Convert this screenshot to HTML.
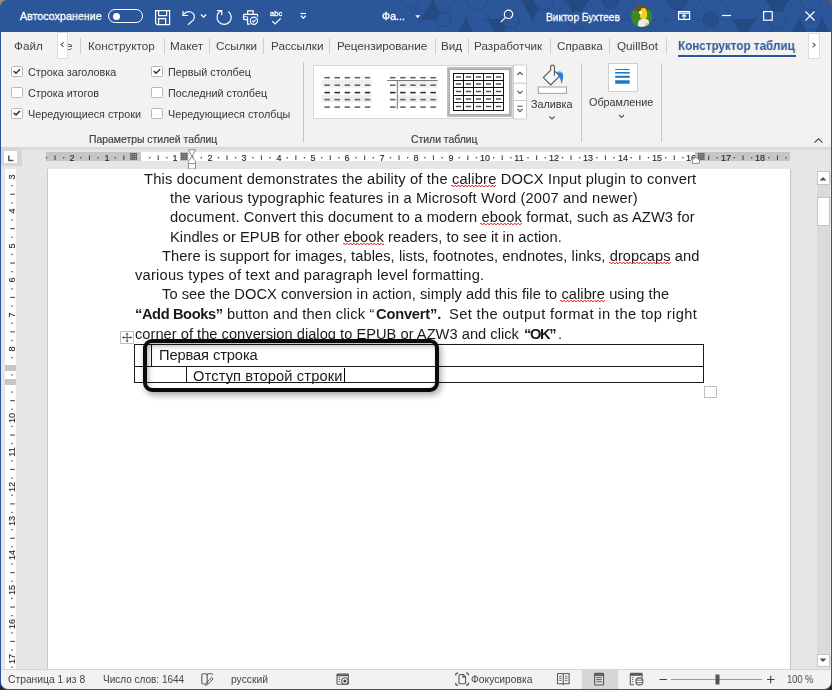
<!DOCTYPE html>
<html><head><meta charset="utf-8">
<style>
*{margin:0;padding:0;box-sizing:border-box}
html,body{width:832px;height:690px;overflow:hidden}
body{position:relative;background:#2a2624;font-family:"Liberation Sans",sans-serif}
.a{position:absolute}
.t{position:absolute;white-space:nowrap;line-height:1;transform-origin:0 0;will-change:transform}
svg{position:absolute;overflow:visible}
#win{position:absolute;left:0;top:0;width:832px;height:690px;border-radius:8px;overflow:hidden;background:#2b579a}
.tab{color:#424242;font-size:11.7px}
.sep{position:absolute;width:1px;background:#d2d0ce}
.cb{position:absolute;width:11.4px;height:11.4px;border:1px solid #b8b8b8;border-radius:1.5px;background:#fff}
.rib{color:#363636;font-size:10.8px}
.doc{color:#1a1a1a;font-size:14.67px}
.st{color:#444;font-size:10.3px}
.rl{color:#2a2a2a;font-size:9px;-webkit-text-stroke:0.15px #2a2a2a}
b{font-weight:700}
.sp{text-decoration:none;position:relative}
.sp::after{content:"";position:absolute;left:-1px;right:0;top:14.2px;height:2.4px;background:linear-gradient(45deg,transparent 35%,#e8303a 35%,#e8303a 65%,transparent 65%) 0 0/3.4px 2.4px repeat-x,linear-gradient(-45deg,transparent 35%,#e8303a 35%,#e8303a 65%,transparent 65%) 1.7px 0/3.4px 2.4px repeat-x;opacity:0.9}
</style></head><body>
<div class="a" style="left:0;top:0;width:14px;height:14px;background:#998a76"></div>
<div class="a" style="left:818px;top:0;width:14px;height:14px;background:#5b5a68"></div>
<div id="win">
<!-- ============ TITLE BAR ============ -->
<div class="a" style="left:0;top:0;width:832px;height:32px;background:#2b579a"></div>
<svg style="left:0;top:0" width="832" height="32"><defs><clipPath id="pc"><rect x="385" y="0" width="447" height="32"/></clipPath></defs><g clip-path="url(#pc)"><path d="M365.70 0L376.85 19.5L387.95 39M387.95 0L376.85 19.5L365.70 39M387.95 0L399.10 19.5L410.20 39M410.20 0L399.10 19.5L387.95 39M410.20 0L421.35 19.5L432.45 39M432.45 0L421.35 19.5L410.20 39M432.45 0L443.60 19.5L454.70 39M454.70 0L443.60 19.5L432.45 39M454.70 0L465.85 19.5L476.95 39M476.95 0L465.85 19.5L454.70 39M476.95 0L488.10 19.5L499.20 39M499.20 0L488.10 19.5L476.95 39M499.20 0L510.35 19.5L521.45 39M521.45 0L510.35 19.5L499.20 39M521.45 0L532.60 19.5L543.70 39M543.70 0L532.60 19.5L521.45 39M543.70 0L554.85 19.5L565.95 39M565.95 0L554.85 19.5L543.70 39M565.95 0L577.10 19.5L588.20 39M588.20 0L577.10 19.5L565.95 39M588.20 0L599.35 19.5L610.45 39M610.45 0L599.35 19.5L588.20 39M610.45 0L621.60 19.5L632.70 39M632.70 0L621.60 19.5L610.45 39M632.70 0L643.85 19.5L654.95 39M654.95 0L643.85 19.5L632.70 39M654.95 0L666.10 19.5L677.20 39M677.20 0L666.10 19.5L654.95 39M677.20 0L688.35 19.5L699.45 39M699.45 0L688.35 19.5L677.20 39M699.45 0L710.60 19.5L721.70 39M721.70 0L710.60 19.5L699.45 39M721.70 0L732.85 19.5L743.95 39M743.95 0L732.85 19.5L721.70 39M743.95 0L755.10 19.5L766.20 39M766.20 0L755.10 19.5L743.95 39M766.20 0L777.35 19.5L788.45 39M788.45 0L777.35 19.5L766.20 39M788.45 0L799.60 19.5L810.70 39M810.70 0L799.60 19.5L788.45 39M810.70 0L821.85 19.5L832.95 39M832.95 0L821.85 19.5L810.70 39M832.95 0L844.10 19.5L855.20 39M855.20 0L844.10 19.5L832.95 39M855.20 0L866.35 19.5L877.45 39M877.45 0L866.35 19.5L855.20 39M385 19.5H832" stroke="#000" stroke-opacity="0.08" stroke-width="1" fill="none"/><path d="M421.35 19.5L443.60 19.5L432.45 0.0z" fill="#000" fill-opacity="0.14"/><path d="M465.85 19.5L454.70 39.0L476.95 39.0z" fill="#000" fill-opacity="0.14"/><path d="M488.10 19.5L510.35 19.5L499.20 39.0z" fill="#000" fill-opacity="0.14"/><path d="M521.45 0.0L543.70 0.0L532.60 19.5z" fill="#000" fill-opacity="0.14"/><path d="M565.95 0.0L588.20 0.0L577.10 19.5z" fill="#000" fill-opacity="0.14"/><path d="M732.85 19.5L755.10 19.5L743.95 39.0z" fill="#000" fill-opacity="0.14"/><path d="M766.20 0.0L788.45 0.0L777.35 19.5z" fill="#000" fill-opacity="0.14"/><path d="M799.60 19.5L788.45 39.0L810.70 39.0z" fill="#000" fill-opacity="0.14"/><path d="M821.85 19.5L810.70 39.0L832.95 39.0z" fill="#000" fill-opacity="0.14"/><circle cx="410.20" cy="0.0" r="7.5" fill="#2b579a" stroke="#000" stroke-opacity="0.12"/><circle cx="443.60" cy="19.5" r="7.2" fill="#2b579a" stroke="#000" stroke-opacity="0.13"/><circle cx="476.95" cy="0.0" r="10" fill="#2b579a" stroke="#000" stroke-opacity="0.12"/><circle cx="510.35" cy="19.5" r="8.5" fill="#2b579a" stroke="#000" stroke-opacity="0.12"/><circle cx="543.70" cy="0.0" r="10" fill="#2b579a" stroke="#000" stroke-opacity="0.13"/><circle cx="577.10" cy="19.5" r="9" fill="#2b579a" stroke="#000" stroke-opacity="0.12"/><circle cx="610.45" cy="0.0" r="8.5" fill="#264e8b" stroke="#000" stroke-opacity="0.11"/><circle cx="677.20" cy="0.0" r="10" fill="#264e8b" stroke="#000" stroke-opacity="0.11"/><circle cx="710.60" cy="19.5" r="7.3" fill="#264e8b" stroke="#000" stroke-opacity="0.11"/><circle cx="777.35" cy="19.5" r="9" fill="#2b579a" stroke="#000" stroke-opacity="0.13"/><circle cx="810.70" cy="0.0" r="10" fill="#2b579a" stroke="#000" stroke-opacity="0.12"/><circle cx="810.70" cy="39.0" r="10" fill="#2b579a" stroke="#000" stroke-opacity="0.12"/></g></svg>
<div class="t" style="left:20px;top:10.7px;font-size:11px;color:#fff;-webkit-text-stroke:0.35px #fff;transform:scaleX(0.975)">Автосохранение</div>
<div class="a" style="left:108px;top:9px;width:35px;height:14px;border:1px solid #fff;border-radius:7px"></div>
<div class="a" style="left:112.5px;top:12.5px;width:7px;height:7px;background:#fff;border-radius:50%"></div>
<!-- save -->
<svg style="left:0;top:0" width="832" height="32" viewBox="0 0 832 32">
 <g fill="none" stroke="#fff" stroke-width="1.2">
  <path d="M155.6 10.6h14v14h-12.5l-1.5-1.5z"/>
  <path d="M158.6 10.6v5h8v-5"/>
  <path d="M158.6 24.6v-6h7v6"/>
  <path d="M183 11v4.5h5"/>
  <path d="M183 15.5c2-3 5-4.5 8-3.5c3.5 1.2 4.3 5.2 2.2 8.2l-5.2 4.5"/>
  <path d="M201 14.5l2.6 2.6l2.6-2.6"/>
  <path d="M228.3 11.5A7.1 7.1 0 1 1 220.8 11"/>
  <path d="M217 10.6h4.7v4.6"/>
  <path d="M247.6 14.6v-3.8h5.6v3.8"/>
  <path d="M247.4 19.6h-3c-0.5 0-0.8-0.3-0.8-0.8v-3.6c0-0.5 0.3-0.8 0.8-0.8h12.4c0.5 0 0.8 0.3 0.8 0.8v1.6"/>
  <path d="M243.8 16.8h4.2" stroke-width="0.9"/>
  <path d="M247.6 17.6v6.6h2.6"/>
  <circle cx="253.9" cy="20.7" r="3.6"/>
  <path d="M252.2 20.8l1.2 1.2l2.2-2.3"/>
  <path d="M272.3 21.2l2.8 2.8l5.6-5.6"/>
  <path d="M300.5 13.5h5.5"/>
  <path d="M300.8 15.8l2.5 2.3l2.5-2.3"/>
  <circle cx="508.5" cy="14.3" r="4.2"/>
  <path d="M505.5 17.3l-4.8 4.8"/>
  <rect x="678.6" y="11.6" width="11" height="7.8"/>
  <path d="M679 13.2h10"/>
  <path d="M684.1 14.5v5M682 16.5l2.1-2l2.1 2"/>
  <path d="M722 15.5h9"/>
  <rect x="763.6" y="11.6" width="8.6" height="8.6"/>
  <path d="M805.5 11.5l9 9M814.5 11.5l-9 9"/>
 </g>
 <path d="M415.3 15.3h4.8l-2.4 2.7z" fill="#fff"/>
</svg>
<div class="t" style="left:270.3px;top:9.9px;font-size:7.2px;color:#fff;-webkit-text-stroke:0.3px #fff;transform:scaleX(1.05)">abc</div>
<div class="t" style="left:382px;top:10.8px;font-size:10.7px;color:#fff;-webkit-text-stroke:0.35px #fff">Фа...</div>
<div class="t" style="left:545.8px;top:11.7px;font-size:11px;color:#fff;-webkit-text-stroke:0.35px #fff;transform:scaleX(0.93)">Виктор Бухтеев</div>
<!-- avatar -->
<div class="a" style="left:630.6px;top:5.6px;width:21.8px;height:21.8px;border-radius:50%;background:#3a8b24;overflow:hidden">
 <div class="a" style="left:-2px;top:-6px;width:26px;height:11px;background:#7a4a1c;border-radius:0 0 50% 40%"></div>
 <div class="a" style="left:9.3px;top:2.3px;width:7px;height:11px;background:#f2cf2a;border-radius:45% 45% 35% 35%"></div>
 <div class="a" style="left:8.6px;top:5.6px;width:3px;height:2.6px;background:#fff;border-radius:50%"></div>
 <div class="a" style="left:7.2px;top:13.2px;width:11px;height:10px;background:#ecebe6;border-radius:45% 35% 0 0"></div>
 <div class="a" style="left:14.5px;top:17.5px;width:4px;height:3px;background:#f2cf2a;border-radius:40%"></div>
</div>

<!-- ============ RIBBON ============ -->
<div class="a" style="left:1px;top:32px;width:830px;height:115px;background:#f3f2f1"></div>
<div class="a" style="left:1px;top:147px;width:830px;height:1px;background:#d6d6d6"></div>
<!-- tabs -->
<div class="t tab" style="left:14.4px;top:40.1px">Файл</div>
<div class="t tab" style="left:65.6px;top:40.1px">е</div>
<div class="a" style="left:56.5px;top:32px;width:11.5px;height:27px;background:#fff;border:1px solid #dcdcdc"></div>
<svg style="left:0;top:0" width="832" height="60"><path d="M63.6 42.3l-2.6 2.3l2.6 2.3" fill="none" stroke="#555" stroke-width="1.1"/></svg>
<div class="sep" style="left:80px;top:38px;height:16px"></div>
<div class="t tab" style="left:87.6px;top:40.1px">Конструктор</div>
<div class="sep" style="left:164px;top:38px;height:16px"></div>
<div class="t tab" style="left:169.5px;top:40.1px">Макет</div>
<div class="sep" style="left:209px;top:38px;height:16px"></div>
<div class="t tab" style="left:216px;top:40.1px">Ссылки</div>
<div class="sep" style="left:262.5px;top:38px;height:16px"></div>
<div class="t tab" style="left:270.5px;top:40.1px">Рассылки</div>
<div class="sep" style="left:328.7px;top:38px;height:16px"></div>
<div class="t tab" style="left:336.6px;top:40.1px">Рецензирование</div>
<div class="sep" style="left:435px;top:38px;height:16px"></div>
<div class="t tab" style="left:441px;top:40.1px">Вид</div>
<div class="sep" style="left:467.5px;top:38px;height:16px"></div>
<div class="t tab" style="left:474px;top:40.1px">Разработчик</div>
<div class="sep" style="left:550px;top:38px;height:16px"></div>
<div class="t tab" style="left:557px;top:40.1px">Справка</div>
<div class="sep" style="left:609px;top:38px;height:16px"></div>
<div class="t tab" style="left:617px;top:40.1px">QuillBot</div>
<div class="sep" style="left:666px;top:38px;height:16px"></div>
<div class="t tab" style="left:678.3px;top:40.4px;font-size:12.5px;font-weight:700;color:#2b579a;transform:scaleX(0.933)">Конструктор таблиц</div>
<div class="a" style="left:678px;top:55px;width:118px;height:2px;background:#2b579a"></div>
<div class="a" style="left:808px;top:32.5px;width:12px;height:26px;background:#fff;border:1px solid #dcdcdc"></div>
<svg style="left:0;top:0" width="832" height="60"><path d="M812.6 42.8l2.6 2.3l-2.6 2.3" fill="none" stroke="#555" stroke-width="1.1"/></svg>

<!-- group 1 checkboxes -->
<div class="cb" style="left:11.2px;top:66px"></div>
<div class="cb" style="left:11.2px;top:86.7px"></div>
<div class="cb" style="left:11.2px;top:107.7px"></div>
<div class="cb" style="left:151.3px;top:66px"></div>
<div class="cb" style="left:151.3px;top:86.7px"></div>
<div class="cb" style="left:151.3px;top:107.7px"></div>
<svg style="left:0;top:0" width="300" height="130">
 <g fill="none" stroke="#3a3a3a" stroke-width="1.1">
  <path d="M13.6 71.2l2.4 2l4-4" stroke-width="1.5"/>
  <path d="M13.6 112.9l2.4 2l4-4" stroke-width="1.5"/>
  <path d="M153.7 71.2l2.4 2l4-4" stroke-width="1.5"/>
 </g>
</svg>
<div class="t rib" style="left:28px;top:66.8px">Строка заголовка</div>
<div class="t rib" style="left:28px;top:88.4px">Строка итогов</div>
<div class="t rib" style="left:28px;top:109px">Чередующиеся строки</div>
<div class="t rib" style="left:168.4px;top:66.8px">Первый столбец</div>
<div class="t rib" style="left:168.4px;top:88.4px">Последний столбец</div>
<div class="t rib" style="left:168.4px;top:109px">Чередующиеся столбцы</div>
<div class="t rib" style="left:88.7px;top:135.2px;font-size:10.4px;color:#444;-webkit-text-stroke:0.2px #444">Параметры стилей таблиц</div>
<div class="sep" style="left:303px;top:62px;height:80px;background:#c8c6c4"></div>

<!-- gallery -->
<div class="a" style="left:313px;top:65px;width:200px;height:54px;background:#fff;border:1px solid #d6d6d6"></div>
<div class="a" style="left:447px;top:67px;width:64.5px;height:50px;border:2px solid #bcbcbc;box-shadow:inset 0 0 0 1px #a9a9a9;background:#fff"></div>
<svg style="left:0;top:0" width="540" height="130">
 <rect x="321.6" y="80" width="50.4" height="7.6" fill="#efefef"/>
 <rect x="321.6" y="94.9" width="50.4" height="7.3" fill="#efefef"/>
 <rect x="397.5" y="80.8" width="40.2" height="7" fill="#efefef"/>
 <rect x="397.5" y="94.9" width="40.2" height="7.3" fill="#efefef"/>
 <rect x="324.4" y="76.9" width="5.5" height="1.6" fill="#666"/>
 <rect x="334.5" y="76.9" width="5.5" height="1.6" fill="#666"/>
 <rect x="344.6" y="76.9" width="5.5" height="1.6" fill="#666"/>
 <rect x="354.7" y="76.9" width="5.5" height="1.6" fill="#666"/>
 <rect x="364.8" y="76.9" width="5.5" height="1.6" fill="#666"/>
 <rect x="390.0" y="76.9" width="5.5" height="1.6" fill="#666"/>
 <rect x="400.1" y="76.9" width="5.5" height="1.6" fill="#666"/>
 <rect x="410.2" y="76.9" width="5.5" height="1.6" fill="#666"/>
 <rect x="420.3" y="76.9" width="5.5" height="1.6" fill="#666"/>
 <rect x="430.4" y="76.9" width="5.5" height="1.6" fill="#666"/>
 <rect x="324.4" y="84.4" width="5.5" height="1.6" fill="#666"/>
 <rect x="334.5" y="84.4" width="5.5" height="1.6" fill="#666"/>
 <rect x="344.6" y="84.4" width="5.5" height="1.6" fill="#666"/>
 <rect x="354.7" y="84.4" width="5.5" height="1.6" fill="#666"/>
 <rect x="364.8" y="84.4" width="5.5" height="1.6" fill="#666"/>
 <rect x="390.0" y="84.4" width="5.5" height="1.6" fill="#666"/>
 <rect x="400.1" y="84.4" width="5.5" height="1.6" fill="#666"/>
 <rect x="410.2" y="84.4" width="5.5" height="1.6" fill="#666"/>
 <rect x="420.3" y="84.4" width="5.5" height="1.6" fill="#666"/>
 <rect x="430.4" y="84.4" width="5.5" height="1.6" fill="#666"/>
 <rect x="324.4" y="91.8" width="5.5" height="1.6" fill="#2e2e2e"/>
 <rect x="334.5" y="91.8" width="5.5" height="1.6" fill="#2e2e2e"/>
 <rect x="344.6" y="91.8" width="5.5" height="1.6" fill="#2e2e2e"/>
 <rect x="354.7" y="91.8" width="5.5" height="1.6" fill="#2e2e2e"/>
 <rect x="364.8" y="91.8" width="5.5" height="1.6" fill="#2e2e2e"/>
 <rect x="390.0" y="91.8" width="5.5" height="1.6" fill="#2e2e2e"/>
 <rect x="400.1" y="91.8" width="5.5" height="1.6" fill="#2e2e2e"/>
 <rect x="410.2" y="91.8" width="5.5" height="1.6" fill="#2e2e2e"/>
 <rect x="420.3" y="91.8" width="5.5" height="1.6" fill="#2e2e2e"/>
 <rect x="430.4" y="91.8" width="5.5" height="1.6" fill="#2e2e2e"/>
 <rect x="324.4" y="98.8" width="5.5" height="1.6" fill="#666"/>
 <rect x="334.5" y="98.8" width="5.5" height="1.6" fill="#666"/>
 <rect x="344.6" y="98.8" width="5.5" height="1.6" fill="#666"/>
 <rect x="354.7" y="98.8" width="5.5" height="1.6" fill="#666"/>
 <rect x="364.8" y="98.8" width="5.5" height="1.6" fill="#666"/>
 <rect x="390.0" y="98.8" width="5.5" height="1.6" fill="#666"/>
 <rect x="400.1" y="98.8" width="5.5" height="1.6" fill="#666"/>
 <rect x="410.2" y="98.8" width="5.5" height="1.6" fill="#666"/>
 <rect x="420.3" y="98.8" width="5.5" height="1.6" fill="#666"/>
 <rect x="430.4" y="98.8" width="5.5" height="1.6" fill="#666"/>
 <rect x="324.4" y="106.3" width="5.5" height="1.6" fill="#666"/>
 <rect x="334.5" y="106.3" width="5.5" height="1.6" fill="#666"/>
 <rect x="344.6" y="106.3" width="5.5" height="1.6" fill="#666"/>
 <rect x="354.7" y="106.3" width="5.5" height="1.6" fill="#666"/>
 <rect x="364.8" y="106.3" width="5.5" height="1.6" fill="#666"/>
 <rect x="390.0" y="106.3" width="5.5" height="1.6" fill="#666"/>
 <rect x="400.1" y="106.3" width="5.5" height="1.6" fill="#666"/>
 <rect x="410.2" y="106.3" width="5.5" height="1.6" fill="#666"/>
 <rect x="420.3" y="106.3" width="5.5" height="1.6" fill="#666"/>
 <rect x="430.4" y="106.3" width="5.5" height="1.6" fill="#666"/>
 <rect x="387.2" y="80" width="50.5" height="1" fill="#777"/>
 <rect x="396.8" y="80" width="1" height="29" fill="#777"/>
<g stroke="#111" stroke-width="1" fill="none">
<path d="M453 73.5h51M453 80.5h51M453 87.5h51M453 95.5h51M453 102.5h51M453 110.5h51M453.5 73v38M463.5 73v38M473.5 73v38M483.5 73v38M493.5 73v38M503.5 73v38"/>
</g><g fill="#555">
<rect x="455.9" y="76.25" width="5.2" height="1.5"/>
<rect x="465.9" y="76.25" width="5.2" height="1.5"/>
<rect x="475.9" y="76.25" width="5.2" height="1.5"/>
<rect x="485.9" y="76.25" width="5.2" height="1.5"/>
<rect x="495.9" y="76.25" width="5.2" height="1.5"/>
<rect x="455.9" y="83.25" width="5.2" height="1.5"/>
<rect x="465.9" y="83.25" width="5.2" height="1.5"/>
<rect x="475.9" y="83.25" width="5.2" height="1.5"/>
<rect x="485.9" y="83.25" width="5.2" height="1.5"/>
<rect x="495.9" y="83.25" width="5.2" height="1.5"/>
<rect x="455.9" y="90.75" width="5.2" height="1.5"/>
<rect x="465.9" y="90.75" width="5.2" height="1.5"/>
<rect x="475.9" y="90.75" width="5.2" height="1.5"/>
<rect x="485.9" y="90.75" width="5.2" height="1.5"/>
<rect x="495.9" y="90.75" width="5.2" height="1.5"/>
<rect x="455.9" y="98.25" width="5.2" height="1.5"/>
<rect x="465.9" y="98.25" width="5.2" height="1.5"/>
<rect x="475.9" y="98.25" width="5.2" height="1.5"/>
<rect x="485.9" y="98.25" width="5.2" height="1.5"/>
<rect x="495.9" y="98.25" width="5.2" height="1.5"/>
<rect x="455.9" y="105.75" width="5.2" height="1.5"/>
<rect x="465.9" y="105.75" width="5.2" height="1.5"/>
<rect x="475.9" y="105.75" width="5.2" height="1.5"/>
<rect x="485.9" y="105.75" width="5.2" height="1.5"/>
<rect x="495.9" y="105.75" width="5.2" height="1.5"/>
</g>
<g fill="#fff" stroke="#cfcfcf" stroke-width="1">
  <rect x="513.5" y="65" width="13" height="18.3"/>
  <rect x="513.5" y="83.3" width="13" height="17.3"/>
  <rect x="513.5" y="100.6" width="13" height="18.4"/>
 </g>
 <g fill="none" stroke="#555" stroke-width="1.1">
  <path d="M517.4 75l2.6-2.6l2.6 2.6"/>
  <path d="M517.4 90.8l2.6 2.6l2.6-2.6"/>
  <path d="M517.4 106.3h5.2M517.4 109l2.6 2.6l2.6-2.6"/>
 </g>
</svg>
<div class="t rib" style="left:410.5px;top:135.2px;font-size:10.4px;color:#444;-webkit-text-stroke:0.2px #444">Стили таблиц</div>

<!-- fill -->
<svg style="left:0;top:0" width="700" height="130">
 <path d="M550.3 70.6l-7 7l7.4 7.3l9-8.9l-4.6-4.6" fill="#f8f8f8" stroke="#555" stroke-width="1.1" stroke-linejoin="miter"/>
 <path d="M550.6 71v-3.8c0-1.4 0.9-2.2 1.9-2.2s1.9 0.8 1.9 2.2v8.6" fill="none" stroke="#555" stroke-width="1.1"/>
 <path d="M556.3 72.8c1.6-1.6 4.2-1.8 5.8 0c1.5 1.6 1.5 4.6-0.5 11.5c-0.6-3.8-1.6-6.4-2.6-7.6z" fill="#2a7fd4"/>
 <path d="M557.5 72.8c1.3-0.9 3.3-0.6 4.2 0.6" fill="none" stroke="#8cc4f0" stroke-width="0.8"/>
 <rect x="538.3" y="87" width="28.2" height="6.4" fill="#fff" stroke="#a8a8a8" stroke-width="1.1"/>
 <path d="M549.5 116.5l2.5 2.5l2.5-2.5M619 115l2.5 2.5l2.5-2.5" fill="none" stroke="#555" stroke-width="1.1"/>
 <rect x="608.5" y="63.5" width="29" height="28" fill="#fff" stroke="#d0d0d0" stroke-width="1"/>
 <g stroke="#1d79c9" stroke-width="1.6">
  <path d="M615.2 69.5h14.5" stroke-width="1"/>
  <path d="M615.2 72.8h14.5" stroke-width="1.6"/>
  <path d="M615.2 76.8h14.5" stroke-width="2.1"/>
 </g>
 <path d="M615.2 82h14.5" stroke="#1d79c9" stroke-width="3.5"/>
 <path d="M814.5 142.6l4-3.8l4 3.8" fill="none" stroke="#444" stroke-width="1.1"/>
</svg>
<div class="t rib" style="left:531px;top:98.7px">Заливка</div>
<div class="sep" style="left:581px;top:63px;height:79px;background:#c8c6c4"></div>
<div class="t rib" style="left:589.4px;top:97.2px">Обрамление</div>
<div class="sep" style="left:661px;top:63px;height:79px;background:#c8c6c4"></div>

<!-- ============ RULER / DOC AREA ============ -->
<div class="a" style="left:1px;top:148px;width:830px;height:521px;background:#e6e6e6"></div>
<div class="a" style="left:1px;top:147px;width:830px;height:4px;background:linear-gradient(#d6d4d2,#e6e6e6)"></div>
<div class="a" style="left:1px;top:148px;width:21px;height:18px;background:#d6d6d6"></div>
<div class="a" style="left:4px;top:151px;width:13px;height:12px;background:#fff"></div>
<svg style="left:0;top:0" width="30" height="170"><path d="M8.8 155.6v5h4.8" fill="none" stroke="#555" stroke-width="1.5"/></svg>

<!-- horizontal ruler -->
<div class="a" style="left:46px;top:152px;width:744px;height:9px;background:#c6c6c6"></div>
<div class="a" style="left:141px;top:152px;width:39px;height:9px;background:#fff"></div>
<div class="a" style="left:188px;top:152px;width:507px;height:9px;background:#fff"></div>
<div class="t rl" style="left:62.20px;top:153.6px;width:20px;text-align:center">2</div>
<div class="t rl" style="left:96.60px;top:153.6px;width:20px;text-align:center">1</div>
<div class="t rl" style="left:165.40px;top:153.6px;width:20px;text-align:center">1</div>
<div class="t rl" style="left:199.80px;top:153.6px;width:20px;text-align:center">2</div>
<div class="t rl" style="left:234.20px;top:153.6px;width:20px;text-align:center">3</div>
<div class="t rl" style="left:268.60px;top:153.6px;width:20px;text-align:center">4</div>
<div class="t rl" style="left:303.00px;top:153.6px;width:20px;text-align:center">5</div>
<div class="t rl" style="left:337.40px;top:153.6px;width:20px;text-align:center">6</div>
<div class="t rl" style="left:371.80px;top:153.6px;width:20px;text-align:center">7</div>
<div class="t rl" style="left:406.20px;top:153.6px;width:20px;text-align:center">8</div>
<div class="t rl" style="left:440.60px;top:153.6px;width:20px;text-align:center">9</div>
<div class="t rl" style="left:475.00px;top:153.6px;width:20px;text-align:center">10</div>
<div class="t rl" style="left:509.40px;top:153.6px;width:20px;text-align:center">11</div>
<div class="t rl" style="left:543.80px;top:153.6px;width:20px;text-align:center">12</div>
<div class="t rl" style="left:578.20px;top:153.6px;width:20px;text-align:center">13</div>
<div class="t rl" style="left:612.60px;top:153.6px;width:20px;text-align:center">14</div>
<div class="t rl" style="left:647.00px;top:153.6px;width:20px;text-align:center">15</div>
<div class="t rl" style="left:681.40px;top:153.6px;width:20px;text-align:center">16</div>
<div class="t rl" style="left:715.80px;top:153.6px;width:20px;text-align:center">17</div>
<div class="t rl" style="left:750.20px;top:153.6px;width:20px;text-align:center">18</div>
<svg style="left:0;top:0" width="832" height="170"><rect x="45.80" y="157" width="1.3" height="1.4" fill="#4a4a4a"/><rect x="54.50" y="155.4" width="1.1" height="4.6" fill="#4a4a4a"/><rect x="63.00" y="157" width="1.3" height="1.4" fill="#4a4a4a"/><rect x="80.20" y="157" width="1.3" height="1.4" fill="#4a4a4a"/><rect x="88.90" y="155.4" width="1.1" height="4.6" fill="#4a4a4a"/><rect x="97.40" y="157" width="1.3" height="1.4" fill="#4a4a4a"/><rect x="114.60" y="157" width="1.3" height="1.4" fill="#4a4a4a"/><rect x="123.30" y="155.4" width="1.1" height="4.6" fill="#4a4a4a"/><rect x="131.80" y="157" width="1.3" height="1.4" fill="#4a4a4a"/><rect x="149.00" y="157" width="1.3" height="1.4" fill="#4a4a4a"/><rect x="157.70" y="155.4" width="1.1" height="4.6" fill="#4a4a4a"/><rect x="166.20" y="157" width="1.3" height="1.4" fill="#4a4a4a"/><rect x="183.40" y="157" width="1.3" height="1.4" fill="#4a4a4a"/><rect x="192.10" y="155.4" width="1.1" height="4.6" fill="#4a4a4a"/><rect x="200.60" y="157" width="1.3" height="1.4" fill="#4a4a4a"/><rect x="217.80" y="157" width="1.3" height="1.4" fill="#4a4a4a"/><rect x="226.50" y="155.4" width="1.1" height="4.6" fill="#4a4a4a"/><rect x="235.00" y="157" width="1.3" height="1.4" fill="#4a4a4a"/><rect x="252.20" y="157" width="1.3" height="1.4" fill="#4a4a4a"/><rect x="260.90" y="155.4" width="1.1" height="4.6" fill="#4a4a4a"/><rect x="269.40" y="157" width="1.3" height="1.4" fill="#4a4a4a"/><rect x="286.60" y="157" width="1.3" height="1.4" fill="#4a4a4a"/><rect x="295.30" y="155.4" width="1.1" height="4.6" fill="#4a4a4a"/><rect x="303.80" y="157" width="1.3" height="1.4" fill="#4a4a4a"/><rect x="321.00" y="157" width="1.3" height="1.4" fill="#4a4a4a"/><rect x="329.70" y="155.4" width="1.1" height="4.6" fill="#4a4a4a"/><rect x="338.20" y="157" width="1.3" height="1.4" fill="#4a4a4a"/><rect x="355.40" y="157" width="1.3" height="1.4" fill="#4a4a4a"/><rect x="364.10" y="155.4" width="1.1" height="4.6" fill="#4a4a4a"/><rect x="372.60" y="157" width="1.3" height="1.4" fill="#4a4a4a"/><rect x="389.80" y="157" width="1.3" height="1.4" fill="#4a4a4a"/><rect x="398.50" y="155.4" width="1.1" height="4.6" fill="#4a4a4a"/><rect x="407.00" y="157" width="1.3" height="1.4" fill="#4a4a4a"/><rect x="424.20" y="157" width="1.3" height="1.4" fill="#4a4a4a"/><rect x="432.90" y="155.4" width="1.1" height="4.6" fill="#4a4a4a"/><rect x="441.40" y="157" width="1.3" height="1.4" fill="#4a4a4a"/><rect x="458.60" y="157" width="1.3" height="1.4" fill="#4a4a4a"/><rect x="467.30" y="155.4" width="1.1" height="4.6" fill="#4a4a4a"/><rect x="475.80" y="157" width="1.3" height="1.4" fill="#4a4a4a"/><rect x="493.00" y="157" width="1.3" height="1.4" fill="#4a4a4a"/><rect x="501.70" y="155.4" width="1.1" height="4.6" fill="#4a4a4a"/><rect x="510.20" y="157" width="1.3" height="1.4" fill="#4a4a4a"/><rect x="527.40" y="157" width="1.3" height="1.4" fill="#4a4a4a"/><rect x="536.10" y="155.4" width="1.1" height="4.6" fill="#4a4a4a"/><rect x="544.60" y="157" width="1.3" height="1.4" fill="#4a4a4a"/><rect x="561.80" y="157" width="1.3" height="1.4" fill="#4a4a4a"/><rect x="570.50" y="155.4" width="1.1" height="4.6" fill="#4a4a4a"/><rect x="579.00" y="157" width="1.3" height="1.4" fill="#4a4a4a"/><rect x="596.20" y="157" width="1.3" height="1.4" fill="#4a4a4a"/><rect x="604.90" y="155.4" width="1.1" height="4.6" fill="#4a4a4a"/><rect x="613.40" y="157" width="1.3" height="1.4" fill="#4a4a4a"/><rect x="630.60" y="157" width="1.3" height="1.4" fill="#4a4a4a"/><rect x="639.30" y="155.4" width="1.1" height="4.6" fill="#4a4a4a"/><rect x="647.80" y="157" width="1.3" height="1.4" fill="#4a4a4a"/><rect x="665.00" y="157" width="1.3" height="1.4" fill="#4a4a4a"/><rect x="673.70" y="155.4" width="1.1" height="4.6" fill="#4a4a4a"/><rect x="682.20" y="157" width="1.3" height="1.4" fill="#4a4a4a"/><rect x="699.40" y="157" width="1.3" height="1.4" fill="#4a4a4a"/><rect x="708.10" y="155.4" width="1.1" height="4.6" fill="#4a4a4a"/><rect x="716.60" y="157" width="1.3" height="1.4" fill="#4a4a4a"/><rect x="733.80" y="157" width="1.3" height="1.4" fill="#4a4a4a"/><rect x="742.50" y="155.4" width="1.1" height="4.6" fill="#4a4a4a"/><rect x="751.00" y="157" width="1.3" height="1.4" fill="#4a4a4a"/><rect x="768.20" y="157" width="1.3" height="1.4" fill="#4a4a4a"/><rect x="776.90" y="155.4" width="1.1" height="4.6" fill="#4a4a4a"/><rect x="785.40" y="157" width="1.3" height="1.4" fill="#4a4a4a"/><rect x="129.4" y="152.2" width="8.4" height="8.6" fill="#c4c4c4"/><rect x="130.40" y="153.0" width="0.9" height="7" fill="#5a5a5a"/><rect x="130.4" y="153.00" width="6.5" height="0.9" fill="#5a5a5a"/><rect x="132.25" y="153.0" width="0.9" height="7" fill="#5a5a5a"/><rect x="130.4" y="154.90" width="6.5" height="0.9" fill="#5a5a5a"/><rect x="134.10" y="153.0" width="0.9" height="7" fill="#5a5a5a"/><rect x="130.4" y="156.80" width="6.5" height="0.9" fill="#5a5a5a"/><rect x="135.95" y="153.0" width="0.9" height="7" fill="#5a5a5a"/><rect x="130.4" y="158.70" width="6.5" height="0.9" fill="#5a5a5a"/><rect x="179.9" y="152.2" width="8.4" height="8.6" fill="#c4c4c4"/><rect x="180.90" y="153.0" width="0.9" height="7" fill="#5a5a5a"/><rect x="180.9" y="153.00" width="6.5" height="0.9" fill="#5a5a5a"/><rect x="182.75" y="153.0" width="0.9" height="7" fill="#5a5a5a"/><rect x="180.9" y="154.90" width="6.5" height="0.9" fill="#5a5a5a"/><rect x="184.60" y="153.0" width="0.9" height="7" fill="#5a5a5a"/><rect x="180.9" y="156.80" width="6.5" height="0.9" fill="#5a5a5a"/><rect x="186.45" y="153.0" width="0.9" height="7" fill="#5a5a5a"/><rect x="180.9" y="158.70" width="6.5" height="0.9" fill="#5a5a5a"/><rect x="696.9" y="152.2" width="8.4" height="8.6" fill="#c4c4c4"/><rect x="697.90" y="153.0" width="0.9" height="7" fill="#5a5a5a"/><rect x="697.9" y="153.00" width="6.5" height="0.9" fill="#5a5a5a"/><rect x="699.75" y="153.0" width="0.9" height="7" fill="#5a5a5a"/><rect x="697.9" y="154.90" width="6.5" height="0.9" fill="#5a5a5a"/><rect x="701.60" y="153.0" width="0.9" height="7" fill="#5a5a5a"/><rect x="697.9" y="156.80" width="6.5" height="0.9" fill="#5a5a5a"/><rect x="703.45" y="153.0" width="0.9" height="7" fill="#5a5a5a"/><rect x="697.9" y="158.70" width="6.5" height="0.9" fill="#5a5a5a"/><path d="M188.4 149.8h7.1l-3.55 6.8l3.55 4.8v7.6h-7.1v-7.6l3.55-4.8z" fill="#fff" stroke="#8a8a8a" stroke-width="1"/><path d="M188.4 163.6h7.1" stroke="#8a8a8a" stroke-width="1"/><path d="M692.3 163.3v-3.3l3.6-2.6l3.6 2.6v3.3z" fill="#fff" stroke="#8a8a8a" stroke-width="1"/></svg>

<!-- vertical ruler -->
<div class="a" style="left:5px;top:169px;width:10.5px;height:500px;background:#fff"></div>
<div class="a" style="left:5px;top:364.5px;width:10.5px;height:6px;background:#c6c6c6"></div>
<div class="a" style="left:5px;top:379.3px;width:10.5px;height:6px;background:#c6c6c6"></div>
<div class="t rl" style="left:1.6px;top:172.00px;width:20px;height:10px;text-align:center;line-height:10px;transform:rotate(-90deg);transform-origin:10px 5px">3</div>
<div class="t rl" style="left:1.6px;top:206.40px;width:20px;height:10px;text-align:center;line-height:10px;transform:rotate(-90deg);transform-origin:10px 5px">4</div>
<div class="t rl" style="left:1.6px;top:240.80px;width:20px;height:10px;text-align:center;line-height:10px;transform:rotate(-90deg);transform-origin:10px 5px">5</div>
<div class="t rl" style="left:1.6px;top:275.20px;width:20px;height:10px;text-align:center;line-height:10px;transform:rotate(-90deg);transform-origin:10px 5px">6</div>
<div class="t rl" style="left:1.6px;top:309.60px;width:20px;height:10px;text-align:center;line-height:10px;transform:rotate(-90deg);transform-origin:10px 5px">7</div>
<div class="t rl" style="left:1.6px;top:344.00px;width:20px;height:10px;text-align:center;line-height:10px;transform:rotate(-90deg);transform-origin:10px 5px">8</div>
<div class="t rl" style="left:1.6px;top:412.80px;width:20px;height:10px;text-align:center;line-height:10px;transform:rotate(-90deg);transform-origin:10px 5px">10</div>
<div class="t rl" style="left:1.6px;top:447.20px;width:20px;height:10px;text-align:center;line-height:10px;transform:rotate(-90deg);transform-origin:10px 5px">11</div>
<div class="t rl" style="left:1.6px;top:481.60px;width:20px;height:10px;text-align:center;line-height:10px;transform:rotate(-90deg);transform-origin:10px 5px">12</div>
<div class="t rl" style="left:1.6px;top:516.00px;width:20px;height:10px;text-align:center;line-height:10px;transform:rotate(-90deg);transform-origin:10px 5px">13</div>
<div class="t rl" style="left:1.6px;top:550.40px;width:20px;height:10px;text-align:center;line-height:10px;transform:rotate(-90deg);transform-origin:10px 5px">14</div>
<div class="t rl" style="left:1.6px;top:584.80px;width:20px;height:10px;text-align:center;line-height:10px;transform:rotate(-90deg);transform-origin:10px 5px">15</div>
<div class="t rl" style="left:1.6px;top:619.20px;width:20px;height:10px;text-align:center;line-height:10px;transform:rotate(-90deg);transform-origin:10px 5px">16</div>
<div class="t rl" style="left:1.6px;top:653.60px;width:20px;height:10px;text-align:center;line-height:10px;transform:rotate(-90deg);transform-origin:10px 5px">17</div>
<svg style="left:0;top:0" width="30" height="690"><rect x="11.3" y="185.00" width="1.4" height="1.3" fill="#4a4a4a"/><rect x="10.2" y="193.70" width="4.6" height="1.1" fill="#4a4a4a"/><rect x="11.3" y="202.20" width="1.4" height="1.3" fill="#4a4a4a"/><rect x="11.3" y="219.40" width="1.4" height="1.3" fill="#4a4a4a"/><rect x="10.2" y="228.10" width="4.6" height="1.1" fill="#4a4a4a"/><rect x="11.3" y="236.60" width="1.4" height="1.3" fill="#4a4a4a"/><rect x="11.3" y="253.80" width="1.4" height="1.3" fill="#4a4a4a"/><rect x="10.2" y="262.50" width="4.6" height="1.1" fill="#4a4a4a"/><rect x="11.3" y="271.00" width="1.4" height="1.3" fill="#4a4a4a"/><rect x="11.3" y="288.20" width="1.4" height="1.3" fill="#4a4a4a"/><rect x="10.2" y="296.90" width="4.6" height="1.1" fill="#4a4a4a"/><rect x="11.3" y="305.40" width="1.4" height="1.3" fill="#4a4a4a"/><rect x="11.3" y="322.60" width="1.4" height="1.3" fill="#4a4a4a"/><rect x="10.2" y="331.30" width="4.6" height="1.1" fill="#4a4a4a"/><rect x="11.3" y="339.80" width="1.4" height="1.3" fill="#4a4a4a"/><rect x="11.3" y="357.00" width="1.4" height="1.3" fill="#4a4a4a"/><rect x="11.3" y="374.20" width="1.4" height="1.3" fill="#4a4a4a"/><rect x="11.3" y="391.40" width="1.4" height="1.3" fill="#4a4a4a"/><rect x="10.2" y="400.10" width="4.6" height="1.1" fill="#4a4a4a"/><rect x="11.3" y="408.60" width="1.4" height="1.3" fill="#4a4a4a"/><rect x="11.3" y="425.80" width="1.4" height="1.3" fill="#4a4a4a"/><rect x="10.2" y="434.50" width="4.6" height="1.1" fill="#4a4a4a"/><rect x="11.3" y="443.00" width="1.4" height="1.3" fill="#4a4a4a"/><rect x="11.3" y="460.20" width="1.4" height="1.3" fill="#4a4a4a"/><rect x="10.2" y="468.90" width="4.6" height="1.1" fill="#4a4a4a"/><rect x="11.3" y="477.40" width="1.4" height="1.3" fill="#4a4a4a"/><rect x="11.3" y="494.60" width="1.4" height="1.3" fill="#4a4a4a"/><rect x="10.2" y="503.30" width="4.6" height="1.1" fill="#4a4a4a"/><rect x="11.3" y="511.80" width="1.4" height="1.3" fill="#4a4a4a"/><rect x="11.3" y="529.00" width="1.4" height="1.3" fill="#4a4a4a"/><rect x="10.2" y="537.70" width="4.6" height="1.1" fill="#4a4a4a"/><rect x="11.3" y="546.20" width="1.4" height="1.3" fill="#4a4a4a"/><rect x="11.3" y="563.40" width="1.4" height="1.3" fill="#4a4a4a"/><rect x="10.2" y="572.10" width="4.6" height="1.1" fill="#4a4a4a"/><rect x="11.3" y="580.60" width="1.4" height="1.3" fill="#4a4a4a"/><rect x="11.3" y="597.80" width="1.4" height="1.3" fill="#4a4a4a"/><rect x="10.2" y="606.50" width="4.6" height="1.1" fill="#4a4a4a"/><rect x="11.3" y="615.00" width="1.4" height="1.3" fill="#4a4a4a"/><rect x="11.3" y="632.20" width="1.4" height="1.3" fill="#4a4a4a"/><rect x="10.2" y="640.90" width="4.6" height="1.1" fill="#4a4a4a"/><rect x="11.3" y="649.40" width="1.4" height="1.3" fill="#4a4a4a"/><rect x="11.3" y="666.60" width="1.4" height="1.3" fill="#4a4a4a"/></svg>

<!-- page -->
<div class="a" style="left:47px;top:169px;width:744px;height:500px;background:#fff;border-left:1px solid #c6c6c6;border-right:1px solid #c6c6c6"></div>

<div class="t doc" style="left:144.4px;top:171.88px;letter-spacing:0.179px">This document demonstrates the ability of the <u class="sp">calibre</u> DOCX Input plugin to convert</div>
<div class="t doc" style="left:169.7px;top:191.18px;letter-spacing:0.148px">the various typographic features in a Microsoft Word (2007 and newer)</div>
<div class="t doc" style="left:169.7px;top:210.38px;letter-spacing:0.135px">document. Convert this document to a modern <u class="sp">ebook</u> format, such as AZW3 for</div>
<div class="t doc" style="left:169.7px;top:229.58px;letter-spacing:0.068px">Kindles or EPUB for other <u class="sp">ebook</u> readers, to see it in action.</div>
<div class="t doc" style="left:162.0px;top:248.98px;letter-spacing:0.085px">There is support for images, tables, lists, footnotes, endnotes, links, <u class="sp">dropcaps</u> and</div>
<div class="t doc" style="left:134.9px;top:268.18px;letter-spacing:0.228px">various types of text and paragraph level formatting.</div>
<div class="t doc" style="left:162.0px;top:287.38px;letter-spacing:0.057px">To see the DOCX conversion in action, simply add this file to <u class="sp">calibre</u> using the</div>
<div class="t doc" style="left:135.0px;top:306.58px;font-weight:700;letter-spacing:-0.396px">“Add Books”</div>
<div class="t doc" style="left:227.2px;top:306.58px;letter-spacing:0.176px">button and then click “</div>
<div class="t doc" style="left:376.0px;top:306.58px;font-weight:700;letter-spacing:-0.192px">Convert”.</div>
<div class="t doc" style="left:448.9px;top:306.58px;letter-spacing:0.380px">Set the output format in the top right</div>
<div class="t doc" style="left:134.8px;top:326.78px;letter-spacing:0.018px">corner of the conversion dialog to EPUB or AZW3 and click</div>
<div class="t doc" style="left:524.2px;top:326.78px;font-weight:700;letter-spacing:-1.322px">“OK”</div>
<div class="t doc" style="left:558.2px;top:326.78px;letter-spacing:-0.778px">.</div>
<!-- table -->
<div class="a" style="left:134px;top:344px;width:570px;height:1px;background:#1a1a1a"></div>
<div class="a" style="left:134px;top:366px;width:570px;height:1px;background:#1a1a1a"></div>
<div class="a" style="left:134px;top:382px;width:570px;height:1px;background:#1a1a1a"></div>
<div class="a" style="left:134px;top:344px;width:1px;height:39px;background:#1a1a1a"></div>
<div class="a" style="left:703px;top:344px;width:1px;height:39px;background:#1a1a1a"></div>
<div class="a" style="left:151px;top:344px;width:1px;height:23px;background:#1a1a1a"></div>
<div class="a" style="left:186px;top:366px;width:1px;height:17px;background:#1a1a1a"></div>
<div class="t doc" style="left:159.3px;top:347.9px;letter-spacing:-0.097px">Первая строка</div>
<div class="t doc" style="left:193.4px;top:368.78px;letter-spacing:0.118px">Отступ второй строки</div>
<div class="a" style="left:344px;top:368px;width:1px;height:15px;background:#000"></div>
<div class="a" style="left:120.2px;top:331px;width:13.5px;height:13.3px;border:1px solid #c0c0c0;background:#fff"></div>
<svg style="left:0;top:0" width="832" height="690">
 <path d="M127.1 333.8v7.4M123 337.5h8.2" stroke="#555" stroke-width="1"/>
 <path d="M127.1 332.6l-1.5 1.8h3zM127.1 342.4l-1.5-1.8h3zM122 337.5l1.8-1.5v3zM132.2 337.5l-1.8-1.5v3z" fill="#555"/>
</svg>
<div class="a" style="left:704px;top:386px;width:13px;height:12px;border:1px solid #bdbdbd;background:#fff"></div>
<!-- annotation -->
<div class="a" style="left:143px;top:339.3px;width:295.5px;height:52.6px;border:4px solid #0a0a0a;border-radius:9px;box-shadow:2px 3px 6px rgba(0,0,0,0.35), inset 2px 3px 5px rgba(0,0,0,0.28)"></div>

<!-- scrollbar -->
<div class="a" style="left:817px;top:185px;width:13px;height:469px;background:#dadada"></div>
<div class="a" style="left:816.5px;top:171px;width:13.5px;height:14px;background:#fff;border:1px solid #c4c4c4"></div>
<div class="a" style="left:816.5px;top:197px;width:13.5px;height:29px;background:#fff;border:1px solid #c4c4c4"></div>
<div class="a" style="left:816.5px;top:653.5px;width:13.5px;height:13.5px;background:#fff;border:1px solid #c4c4c4"></div>
<svg style="left:0;top:0" width="832" height="690">
 <path d="M819.5 180.5l3.5-3.5l3.5 3.5z" fill="#555"/>
 <path d="M819.5 658.5l3.5 3.5l3.5-3.5z" fill="#555"/>
</svg>

<!-- ============ STATUS BAR ============ -->
<div class="a" style="left:1px;top:669px;width:830px;height:20px;background:#f3f2f1;border-top:1px solid #d6d6d6;border-radius:0 0 7px 7px"></div>
<div class="t st" style="left:8.4px;top:674.8px">Страница 1 из 8</div>
<div class="t st" style="left:102.7px;top:674.8px;font-size:10px">Число слов: 1644</div>
<div class="t st" style="left:230.6px;top:674.8px">русский</div>
<div class="t st" style="left:471px;top:674.8px">Фокусировка</div>
<div class="t st" style="left:786.6px;top:674.6px;transform:scaleX(0.9)">100 %</div>
<div class="a" style="left:581.5px;top:670px;width:36.5px;height:19px;background:#d6d6d6"></div>
<svg style="left:0;top:0" width="832" height="690">
 <g fill="none" stroke="#5a5a5a" stroke-width="1.1">
  <path d="M207.2 684v-8.6c0-1-0.6-1.6-1.6-1.6h-2.4c-0.9 0-1.4 0.6-1.4 1.5v7.5c0 0.8 0.5 1.2 1.2 1.2h2.3"/>
  <path d="M207.2 675.4c0-1 0.6-1.6 1.6-1.6h2.6c0.7 0 1.3 0.4 1.3 1"/>
  <path d="M211.6 677.4l1.5 1.4l-5.5 5.9l-2 0.7l0.4-2z" stroke-width="1"/>
  <rect x="337" y="674" width="11.4" height="10.2" rx="0.8"/>
  <path d="M336.8 675.2h11.8" stroke-width="2"/>
  <path d="M338.6 677.3h1.6M338.6 679.4h1.6M338.6 681.5h1.6" stroke-width="1"/>
  <circle cx="344.9" cy="681" r="3.2" fill="#f3f2f1"/>
  <path d="M455.8 675.5v-1.2c0-0.7 0.5-1.2 1.2-1.2h1.2M466 673.1h1.2c0.7 0 1.2 0.5 1.2 1.2v1.2M468.4 682.8v1.2c0 0.7-0.5 1.2-1.2 1.2h-1.2M458.2 685.2h-1.2c-0.7 0-1.2-0.5-1.2-1.2v-1.2" stroke-width="1.3"/>
  <path d="M459 675.5c0-0.6 0.4-1 1-1h3.4l2.2 2.2v6c0 0.6-0.4 1-1 1h-4.6c-0.6 0-1-0.4-1-1z"/>
  <path d="M463 674.8v2.3h2.3"/>
  <path d="M557.5 673.5h4.5c0.8 0 1.3 0.5 1.3 1.3v8.5M563.3 674.8c0-0.8 0.5-1.3 1.3-1.3h4.5v10.3h-5.2l-0.6 0.6l-0.6-0.6h-5.2v-10.3"/>
  <path d="M559.2 676.2h2.4M559.2 678.3h2.4M559.2 680.4h2.4M565 676.2h2.4M565 678.3h2.4M565 680.4h2.4" stroke-width="0.9"/>
  <rect x="594.6" y="673.4" width="9" height="11.6" rx="0.6"/>
  <path d="M594.6 675h9" stroke-width="1.8"/>
  <path d="M596.3 677.4h5.6M596.3 679.5h5.6M596.3 681.6h5.6" stroke-width="0.9"/>
  <path d="M634 684.8h-3.1c-0.4 0-0.6-0.2-0.6-0.6v-10.2c0-0.4 0.2-0.6 0.6-0.6h10.6c0.4 0 0.6 0.2 0.6 0.6v3.8"/>
  <path d="M630.3 674.9h11.8" stroke-width="1.8"/>
  <path d="M632 677.4h1.3M632 679.5h1.3M632 681.6h1.3" stroke-width="0.9"/>
  <circle cx="639.4" cy="681.4" r="3.5" fill="#f3f2f1"/>
  <path d="M636 680.2h6.8M636 682.6h6.8" stroke-width="0.8"/>
 </g>
 <circle cx="344.9" cy="681" r="1.5" fill="#444"/>
 <path d="M659.5 679.5h7.5M767 679.5h7.5M770.7 675.8v7.5" stroke="#444" stroke-width="1.1"/>
 <path d="M671 679.5h91" stroke="#999" stroke-width="1"/>
 <rect x="715.5" y="674.5" width="4" height="10" fill="#555"/>
</svg>

<!-- borders -->
<div class="a" style="left:0;top:32px;width:1px;height:658px;background:#2b579a"></div>
<div class="a" style="left:831px;top:32px;width:1px;height:658px;background:#2b579a"></div>
<div class="a" style="left:0;top:689px;width:832px;height:1px;background:#2b579a"></div>
</div>
</body></html>
